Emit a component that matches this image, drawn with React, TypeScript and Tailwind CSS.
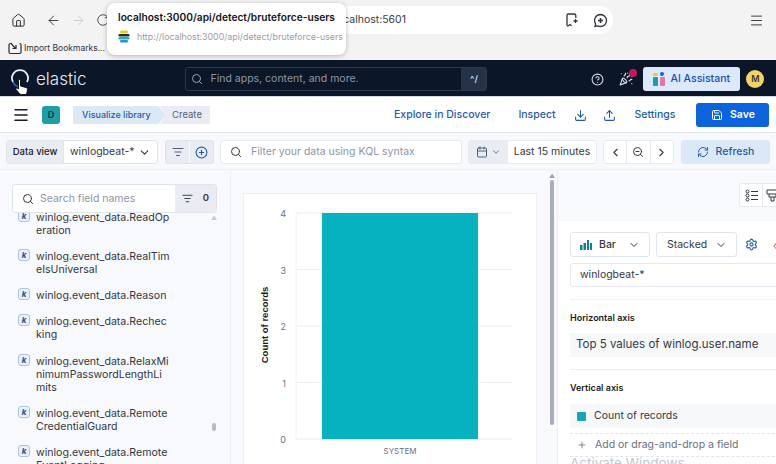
import {
  ArrowLeft,
  ArrowRight,
  Calendar,
  ChevronDown,
  ChevronLeft,
  ChevronRight,
  CircleHelp,
  CirclePlus,
  Download,
  Eraser,
  House,
  ListFilter,
  Menu,
  PartyPopper,
  Plus,
  RefreshCw,
  RotateCw,
  Save,
  Search,
  Settings,
  Upload,
  ZoomOut,
} from "lucide-react";

const fields = [
  ["winlog.event_data.ReadOp", "eration"],
  ["winlog.event_data.RealTim", "eIsUniversal"],
  ["winlog.event_data.Reason"],
  ["winlog.event_data.Rechec", "king"],
  ["winlog.event_data.RelaxMi", "nimumPasswordLengthLi", "mits"],
  ["winlog.event_data.Remote", "CredentialGuard"],
  ["winlog.event_data.Remote", "EventLogging"],
];

function ElasticMark() {
  return (
    <svg width="20" height="20" viewBox="0 0 20 20" fill="none">
      <path d="M3 13a8 8 0 1 1 14 0" stroke="#e8edf5" strokeWidth="1.8" />
      <path d="M3 13a8 8 0 0 0 5 4.8" stroke="#1d5fc4" strokeWidth="1.8" />
    </svg>
  );
}

function TinyLogo() {
  return (
    <svg width="12" height="13" viewBox="0 0 12 13">
      <rect x="2" y="0.5" width="8" height="3" rx="1.5" fill="#f5c518" />
      <rect x="0.5" y="4" width="11" height="2.5" rx="1.2" fill="#1f2d3d" />
      <rect x="0.5" y="7" width="11" height="2.5" rx="1.2" fill="#14b8b0" />
      <rect x="2" y="10" width="8" height="2.5" rx="1.2" fill="#2b8fd6" />
    </svg>
  );
}

function Chart() {
  const ticks = [
    { label: "4", y: 21 },
    { label: "3", y: 77.5 },
    { label: "2", y: 134 },
    { label: "1", y: 190.5 },
    { label: "0", y: 247 },
  ];
  return (
    <svg width="293" height="272" viewBox="1 2 293 272" className="block">
      <line x1="53" y1="21" x2="53" y2="247" stroke="#f1f2f5" />
      {ticks.map((t) => (
        <g key={t.label}>
          <line x1="53" y1={t.y} x2="269" y2={t.y} stroke="#eceef2" />
          <text x="43" y={t.y + 4} fontSize="9" fill="#6b7280" textAnchor="end">
            {t.label}
          </text>
        </g>
      ))}
      <rect x="79" y="21" width="156" height="226" fill="#07b2c0" />
      <text
        x="0"
        y="0"
        fontSize="9.5"
        fontWeight="700"
        fontFamily="Liberation Sans, sans-serif"
        fill="#1a1c21"
        textAnchor="middle"
        transform="translate(25 133) rotate(-90)"
      >
        Count of records
      </text>
      <text x="157" y="262" fontSize="8" fill="#6b7280" textAnchor="middle">
        SYSTEM
      </text>
    </svg>
  );
}

export default function App() {
  return (
    <div className="relative flex h-[464px] w-[776px] flex-col overflow-hidden whitespace-nowrap bg-white font-['Inter','Liberation_Sans',sans-serif] text-[#343741]">
      {/* browser chrome */}
      <div className="h-[60px] shrink-0 bg-[#f3f3f4]">
        <div className="flex h-[36px] items-center pl-[11px] pr-[12px] pt-1">
          <House size={15} strokeWidth={1.6} className="text-[#2b2b33]" />
          <div className="ml-[20px] flex items-center gap-[10px]">
            <ArrowLeft size={15} strokeWidth={1.5} className="text-[#3a3a44]" />
            <ArrowRight size={15} strokeWidth={1.5} className="text-[#c9c9cf]" />
            <RotateCw size={14} strokeWidth={1.5} className="text-[#3a3a44]" />
          </div>
          <div className="ml-[5px] flex h-[28px] w-[498px] items-center justify-end rounded-[14px] bg-white">
            <span className="mr-[159px] text-[10.5px] text-[#3a3a44]">localhost:5601</span>
            <svg width="14" height="16" viewBox="0 0 14 16" fill="none" stroke="#33333b" strokeWidth="1.3" className="mr-[14px]">
              <path d="M9 2H3.5A1.5 1.5 0 0 0 2 3.5V13c0 .8.8 1.2 1.4.7L5 12.5l1.6 1.2" />
              <path d="M9 2c1 0 1.8.6 1.8 1.6V6M8.5 9h4M10.5 7v4" />
            </svg>
            <svg width="15" height="15" viewBox="0 0 15 15" fill="none" stroke="#33333b" strokeWidth="1.3" className="mr-[5px]">
              <path d="M7.5 1.5a6 6 0 0 1 0 12c-1.1 0-2-.2-2.8-.6L2 13.5l.7-2.5a6 6 0 0 1 4.8-9.5Z" />
              <path d="M7.5 5v5M5 7.5h5" strokeWidth="1.6" />
            </svg>
          </div>
          <Menu size={15} strokeWidth={1.5} className="ml-auto text-[#33333b]" />
        </div>
        <div className="flex h-[24px] items-center gap-[2px] pl-[8px]">
          <svg width="14" height="13" viewBox="0 0 14 13" fill="none" stroke="#2b2b33" strokeWidth="1.2">
            <path d="M4 1.5H2.5A1.5 1.5 0 0 0 1 3v7a1.5 1.5 0 0 0 1.5 1.5h9A1.5 1.5 0 0 0 13 10V3a1.5 1.5 0 0 0-1.5-1.5" />
            <path d="M3.5 2l4 4.5M8 3v3.5H4.5" />
          </svg>
          <span className="text-[8.5px] text-[#33333b]">Import Bookmarks...</span>
        </div>
      </div>

      {/* elastic header */}
      <div className="flex h-[37px] shrink-0 items-center border-b border-[#d3dae6] bg-[#0b1628] pl-[10px] pt-[2px]">
        <ElasticMark />
        <span className="ml-[6px] text-[17px] font-light leading-none text-[#e8edf5]">elastic</span>
        <div className="ml-[99px] flex h-[24px] w-[302px] rounded-[3px] border border-[#2c3850] bg-[#0b1628]">
          <div className="flex flex-1 items-center gap-[7px] pl-[5px]">
            <Search size={12} className="text-[#98a2b3]" />
            <span className="text-[10.5px] text-[#8d96a6]">Find apps, content, and more.</span>
          </div>
          <div className="flex w-[25px] items-center justify-center bg-[#263246] text-[9px] font-semibold text-[#d3dae6]">^/</div>
        </div>
        <CircleHelp size={13} className="ml-[104px] text-[#d3dae6]" />
        <div className="relative ml-[15px]">
          <PartyPopper size={14} className="text-[#d3dae6]" />
          <span className="absolute right-[-4px] top-[-3px] h-[8px] w-[8px] rounded-full bg-[#c2185b]" />
        </div>
        <div className="ml-[10px] flex h-[24px] w-[97px] items-center gap-[5px] rounded-[3px] bg-[#dbe9fb] pl-[10px]">
          <svg width="12" height="14" viewBox="0 0 12 14">
            <rect x="0" y="5" width="5" height="9" rx="1" fill="#14a3a8" />
            <rect x="0" y="1" width="5" height="3" rx="1.5" fill="#f5c518" />
            <circle cx="9" cy="2" r="2" fill="#0b64dd" />
            <rect x="7" y="5" width="5" height="9" rx="1" fill="#ee72a6" />
          </svg>
          <span className="text-[10.5px] font-medium text-[#1750ba]">AI Assistant</span>
        </div>
        <div className="ml-[6px] flex h-[18px] w-[18px] items-center justify-center rounded-full bg-[#f6d365] text-[9px] font-semibold text-[#343741]">M</div>
      </div>

      {/* app bar */}
      <div className="flex h-[36px] shrink-0 items-center border-b border-[#e6e9f0] bg-white pl-[12px] pt-[1px]">
        <Menu size={18} strokeWidth={2} className="text-[#1a1c21]" />
        <div className="ml-[12px] flex h-[18px] w-[18px] items-center justify-center rounded-[3px] bg-[#1ba0a8] text-[9px] font-semibold text-[#10323a]">D</div>
        <div className="ml-[13px] flex items-center">
          <div className="flex h-[18px] w-[93px] items-center bg-[#dbe9f7] pl-[9px] text-[9px] font-medium text-[#1f5da8] [clip-path:polygon(0_0,92%_0,100%_50%,92%_100%,0_100%)]">Visualize library</div>
          <div className="ml-[-6px] flex h-[18px] w-[50px] items-center justify-center bg-[#e9edf3] pl-[4px] text-[9.5px] text-[#536177] [clip-path:polygon(0_0,100%_0,100%_100%,0_100%,12%_50%)]">Create</div>
        </div>
        <span className="ml-[184px] text-[10.5px] font-medium text-[#1f5da8]">Explore in Discover</span>
        <span className="ml-[28px] text-[10.5px] font-medium text-[#1f5da8]">Inspect</span>
        <Download size={13} className="ml-[18px] text-[#1f5da8]" />
        <Upload size={13} className="ml-[16px] text-[#1f5da8]" />
        <span className="ml-[19px] text-[10.5px] font-medium text-[#1f5da8]">Settings</span>
        <div className="ml-[21px] flex h-[24px] w-[73px] items-center justify-center gap-[7px] rounded-[3px] bg-[#0b64dd] text-[10.5px] font-semibold text-white">
          <Save size={12} />
          Save
        </div>
      </div>

      {/* query bar */}
      <div className="flex h-[37px] shrink-0 items-center gap-[6px] border-b border-[#eef0f5] bg-[#f7f9fc] pl-[6px] pt-[2px]">
        <div className="flex h-[24px] w-[152px] overflow-hidden rounded-[3px] border border-[#e0e4ec] bg-white">
          <div className="flex w-[57px] items-center justify-center border-r border-[#e0e4ec] bg-[#e9edf3] text-[9.5px] font-medium text-[#1a1c21]">Data view</div>
          <div className="flex flex-1 items-center justify-between pl-[6px] pr-[6px] text-[10.5px]">
            winlogbeat-*
            <ChevronDown size={13} />
          </div>
        </div>
        <div className="ml-[1px] flex h-[24px] w-[49px] overflow-hidden rounded-[3px] border border-[#e0e4ec] bg-[#e9edf3] text-[#1f5da8]">
          <div className="flex flex-1 items-center justify-center border-r border-[#f7f9fc]"><ListFilter size={12} className="text-[#536177]" /></div>
          <div className="flex flex-1 items-center justify-center"><CirclePlus size={13} /></div>
        </div>
        <div className="flex h-[24px] w-[242px] items-center gap-[9px] rounded-[3px] border border-[#e6e9f0] bg-white pl-[9px]">
          <Search size={12} className="text-[#343741]" />
          <span className="text-[10.5px] text-[#8d96a6]">Filter your data using KQL syntax</span>
        </div>
        <div className="flex h-[24px] w-[129px] overflow-hidden rounded-[3px] border border-[#e6e9f0] bg-white">
          <div className="flex w-[39px] items-center justify-center gap-[3px] bg-[#e9edf3] text-[#536177]">
            <Calendar size={12} />
            <ChevronDown size={10} />
          </div>
          <div className="flex flex-1 items-center justify-center text-[10.5px] text-[#343741]">Last 15 minutes</div>
        </div>
        <div className="flex h-[24px] w-[71px] overflow-hidden rounded-[3px] border border-[#e6e9f0] bg-white text-[#343741]">
          <div className="flex flex-1 items-center justify-center border-r border-[#e6e9f0]"><ChevronLeft size={13} /></div>
          <div className="flex flex-1 items-center justify-center border-r border-[#e6e9f0]"><ZoomOut size={12} /></div>
          <div className="flex flex-1 items-center justify-center"><ChevronRight size={13} /></div>
        </div>
        <div className="ml-[1px] flex h-[24px] w-[89px] items-center justify-center gap-[7px] rounded-[3px] bg-[#dbe9f7] text-[10.5px] font-medium text-[#1f5da8]">
          <RefreshCw size={12} />
          Refresh
        </div>
      </div>

      {/* workspace */}
      <div className="flex min-h-0 flex-1 bg-[#f7f9fc]">
        <aside className="relative flex w-[231px] shrink-0 flex-col border-r border-[#eef0f5] pl-[12px] pt-[14px]">
          <div className="z-10 flex h-[29px] w-[205px] shrink-0 overflow-hidden rounded-[3px] border border-[#e0e4ec] bg-white">
            <div className="flex flex-1 items-center gap-[6px] pl-[9px]">
              <Search size={12} className="text-[#343741]" />
              <span className="text-[10.5px] text-[#8d96a6]">Search field names</span>
            </div>
            <div className="flex w-[41px] items-center justify-center gap-[10px] bg-[#e9edf3]">
              <ListFilter size={11} className="text-[#343741]" />
              <span className="text-[9.5px] font-semibold">0</span>
            </div>
          </div>
          <div className="min-h-0 flex-1 overflow-hidden">
            <div className="mt-[-2.5px] flex flex-col gap-[13.25px] pl-[6px]">
              {fields.map((lines, i) => (
                <div key={i} className="flex gap-[6px]">
                  <span className="mt-[-1px] flex h-[12px] w-[12px] shrink-0 items-center justify-center rounded-[3px] border border-[#a9c4e4] bg-[#e8f0fa] text-[8px] font-bold italic leading-none text-[#1f4f8f]">k</span>
                  <div className="text-[10.6px] leading-[13px] text-[#343741]">
                    {lines.map((line) => (
                      <div key={line}>{line}</div>
                    ))}
                  </div>
                </div>
              ))}
            </div>
          </div>
          <span className="absolute left-[212px] top-[253px] h-[8px] w-[4px] rounded-full bg-[#b4bac6]" />
          <span className="absolute left-[211px] top-[45px] text-[6px] leading-none text-[#c3c8d2]">▲</span>
        </aside>

        <main className="flex-1 overflow-hidden pl-[12px] pt-[23px]">
          <div className="h-full w-[294px] border border-b-0 border-[#eef0f5] bg-white">
            <Chart />
          </div>
        </main>

        <div className="flex w-[20px] shrink-0 flex-col items-center pl-[10px] pt-[2px]">
          <span className="text-[6px] leading-[8px] text-[#9aa1ae]">▲</span>
          <div className="h-[245px] w-[4px] rounded-full bg-[#a8aebd]" />
        </div>

        <section className="flex w-[219px] shrink-0 flex-col overflow-hidden border-l border-[#eef0f5]">
          <div className="flex h-[51px] shrink-0 items-start pl-[181px] pt-[13px]">
            <div className="flex h-[24px] w-[60px] shrink-0 rounded-[3px] border border-[#e6e9f0] bg-white">
              <div className="flex w-[23px] items-center justify-center border-r border-[#e6e9f0]">
                <svg width="13" height="13" viewBox="0 0 13 13" fill="none" stroke="#343741" strokeWidth="1">
                  <circle cx="2.5" cy="2.5" r="1.5" />
                  <circle cx="2.5" cy="6.5" r="1.5" />
                  <circle cx="2.5" cy="10.5" r="1.5" />
                  <path d="M6 2.5h7M6 6.5h7M6 10.5h7" />
                </svg>
              </div>
              <div className="flex items-center pl-[3px]">
                <svg width="13" height="13" viewBox="0 0 13 13" fill="none" stroke="#343741" strokeWidth="1">
                  <path d="M1 1h11v4H1zM3 5v3h7V5M5 8v4h3V8" />
                </svg>
              </div>
            </div>
          </div>
          <div className="flex-1 bg-white pl-[12px] pt-[11px]">
            <div className="flex items-center">
              <div className="flex h-[25px] w-[80px] shrink-0 items-center rounded-[3px] border border-[#e0e4ec] pl-[9px] text-[10.5px] font-medium">
                <svg width="12" height="10" viewBox="0 0 12 10" fill="#14808f">
                  <rect x="0" y="5" width="2.5" height="5" />
                  <rect x="3.5" y="3" width="2.5" height="7" />
                  <rect x="7" y="0" width="2" height="10" />
                  <rect x="10" y="3" width="2" height="7" />
                </svg>
                <span className="ml-[7px]">Bar</span>
                <ChevronDown size={12} className="ml-auto mr-[9px]" />
              </div>
              <div className="ml-[6px] flex h-[25px] w-[81px] shrink-0 items-center justify-between rounded-[3px] border border-[#e0e4ec] pl-[10px] pr-[9px] text-[10.5px]">
                Stacked
                <ChevronDown size={12} />
              </div>
              <Settings size={13} className="ml-[8px] shrink-0 text-[#1f5da8]" />
              <Eraser size={13} strokeWidth={1.5} className="ml-[15px] shrink-0 text-[#bd271e]" />
            </div>
            <div className="mt-[6px] flex h-[24px] w-[230px] items-center rounded-[3px] border border-[#e6e9f0] pl-[9px] text-[10.5px]">winlogbeat-*</div>
            <div className="mt-[12px] h-px w-[230px] bg-[#eef0f5]" />
            <div className="mt-[12px] text-[9px] font-semibold leading-[12px] text-[#1a1c21]">Horizontal axis</div>
            <div className="mt-[9px] flex h-[24px] w-[230px] items-center bg-[#f7f8fa] pl-[6px] text-[11.5px]">Top 5 values of winlog.user.name</div>
            <div className="mt-[12px] h-px w-[230px] bg-[#eef0f5]" />
            <div className="mt-[12px] text-[9px] font-semibold leading-[12px] text-[#1a1c21]">Vertical axis</div>
            <div className="mt-[10px] flex h-[24px] w-[230px] items-center gap-[8px] bg-[#f7f8fa] pl-[7px] text-[10.5px]">
              <span className="h-[9px] w-[9px] rounded-[1px] bg-[#14a7b5]" />
              Count of records
            </div>
            <div className="mt-[5px] flex h-[24px] w-[230px] items-center gap-[8px] border-y border-dashed border-[#e0e4ec] pl-[7px] text-[10.5px] text-[#69707d]">
              <Plus size={10} />
              Add or drag-and-drop a field
            </div>
          </div>
        </section>
      </div>

      {/* overlays */}
      <div className="absolute left-[107px] top-[3px] h-[52px] w-[239px] rounded-[8px] bg-white pl-[11px] pt-[7px] shadow-[0_1px_5px_rgba(0,0,0,0.25)]">
        <div className="text-[10.2px] font-semibold leading-[14px] text-[#15141a]">localhost:3000/api/detect/bruteforce-users</div>
        <div className="mt-[6px] flex items-center gap-[7px]">
          <TinyLogo />
          <span className="text-[8.8px] leading-[12px] text-[#9b9ba3]">http://localhost:3000/api/detect/bruteforce-users</span>
        </div>
      </div>
      <svg width="14" height="18" viewBox="0 0 14 18" className="absolute left-[15px] top-[78px]">
        <path d="M4 1.5c1 0 1.5.7 1.5 1.5v5l5.5 1.5c1 .3 1.5 1 1.5 2l-.5 3c-.2 1-.8 2-2 2H6.5c-1 0-1.5-.5-2-1L1 11.5c-.6-.8.5-2 1.5-1.2l1 .7V3c0-.8-.2-1.5.5-1.5Z" fill="#fff" stroke="#111" strokeWidth="1" />
      </svg>
      <div className="absolute left-[570px] top-[456px] text-[13.5px] leading-[14px] text-[#c3c7cf]">Activate Windows</div>
    </div>
  );
}
